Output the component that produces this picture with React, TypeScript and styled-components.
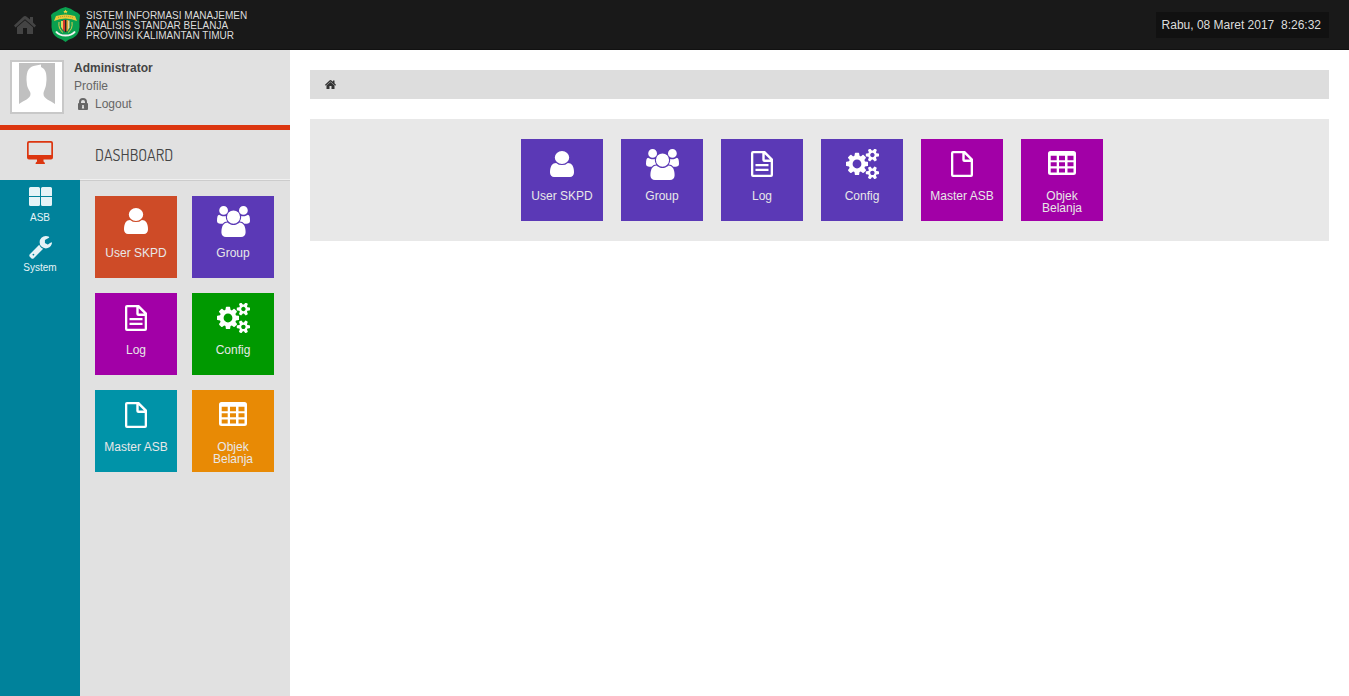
import React from "react";
import styled, { createGlobalStyle } from "styled-components";

const GlobalStyle = createGlobalStyle`
  * { box-sizing: border-box; }
  body {
    margin: 0;
    background: #fff;
    color: #666;
    font: 12px/18px "Liberation Sans", Arial, sans-serif;
  }
  a { color: inherit; text-decoration: none; }
  svg { display: block; flex: none; }
`;

const Page = styled.div`
  display: flex;
  flex-direction: column;
  min-height: 100vh;
`;

const Header = styled.header`
  display: flex;
  align-items: center;
  height: 50px;
  padding: 0 20px 0 14px;
  background: #191919;
  border-bottom: 1px solid #111;
`;

const HomeLink = styled.a`
  color: #444;
  margin-right: 15px;
`;

const Brand = styled.a`
  display: flex;
  align-items: center;
  gap: 6px;
  color: #ddd;
  font-size: 10px;
  line-height: 10px;
`;

const BrandName = styled.span`
  padding-top: 2px;
`;

const Clock = styled.time`
  margin-left: auto;
  padding: 4px 8px 4px 6px;
  background: #111;
  color: #ddd;
  white-space: pre;
`;

const Body = styled.div`
  display: flex;
  flex: 1;
`;

const Sidebar = styled.aside`
  display: flex;
  flex-direction: column;
  width: 290px;
  flex: none;
  background: #e1e1e1;
`;

const Account = styled.section`
  display: flex;
  gap: 10px;
  height: 80px;
  padding: 10px 10px 0;
  border-bottom: 5px solid #dc3610;
`;

const Avatar = styled.div`
  width: 54px;
  height: 54px;
  border: 2px solid #c8c8c8;
  background: #fff;
  display: flex;
  justify-content: center;
`;

const AccountLinks = styled.div`
  display: flex;
  flex-direction: column;
  margin-top: -1px;
`;

const UserName = styled.strong`
  color: #444;
`;

const Logout = styled.a`
  display: flex;
  align-items: center;
  gap: 7px;
  padding-left: 4px;
`;

const DashboardBar = styled.div`
  display: flex;
  align-items: center;
  height: 50px;
`;

const DashboardIcon = styled.a`
  display: flex;
  justify-content: center;
  width: 80px;
  padding-bottom: 5px;
  color: #dc3610;
`;

const DashboardTitle = styled.h1`
  flex: 1;
  height: 50px;
  margin: 0;
  padding-left: 15px;
  border-bottom: 1px solid #f0f0f0;
  color: #444;
  font: 400 16px/50px Dosis, "Roboto Condensed", "Open Sans Condensed", Lato, sans-serif;
`;

const SideContent = styled.div`
  display: flex;
  flex: 1;
`;

const Rail = styled.nav`
  width: 80px;
  padding-top: 4px;
  background: #00829b;
`;

const RailLink = styled.a`
  display: flex;
  flex-direction: column;
  align-items: center;
  height: 50px;
  color: #e6f3f7;
  font-size: 10px;
  line-height: 12px;
`;

const RailIcon = styled.span`
  display: flex;
  align-items: center;
  height: 26px;
  margin-bottom: 2px;
`;

const SideTiles = styled.nav`
  flex: 1;
  display: grid;
  grid-template-columns: 82px 82px;
  align-content: start;
  gap: 15px;
  padding: 15px;
  border-top: 1px solid #ccc;
`;

const Tile = styled.a<{ $color: string }>`
  display: block;
  width: 82px;
  height: 82px;
  padding: 9px 6px 0;
  background: ${(p) => p.$color};
  color: #e8e8e8;
  line-height: 12px;
  text-align: center;
`;

const TileIcon = styled.span`
  display: flex;
  align-items: center;
  justify-content: center;
  height: 32px;
  margin-bottom: 10px;
  color: #fff;
`;

const Main = styled.main`
  flex: 1;
  padding: 20px;
`;

const Breadcrumb = styled.nav`
  display: flex;
  align-items: center;
  height: 29px;
  margin-bottom: 20px;
  padding: 0 15px;
  background: #ddd;
  color: #333;
`;

const TilePanel = styled.section`
  display: flex;
  flex-wrap: wrap;
  justify-content: center;
  gap: 18px;
  padding: 20px 15px 20px 0;
  background: #e8e8e8;
`;

type IconName = "user" | "group" | "log" | "config" | "file" | "table" | "wrench" | "lock" | "home" | "desktop" | "grid";

const smallGear =
  "v140q0 16-149 31-12 27-30 52 51 113 51 138 0 4-4 7-122 71-124 71-8 0-46-47t-52-68q-20 2-30 2t-30-2q-14 21-52 68t-46 47q-2 0-124-71-4-3-4-7 0-25 51-138-18-25-30-52-149-15-149-31v-140q0-16 149-31 13-29 30-52-51-113-51-138 0-4 4-7 4-2 35-20t59-34 30-16q8 0 46 46.5t52 67.5q20-2 30-2t30 2q51-71 92-112l6-2q4 0 124 70 4 3 4 7 0 25-51 138 17 23 30 52 149 15 149 31z";

const sheet =
  "M2 0H14L22 8V24Q22 26 20 26H2Q0 26 0 24V2Q0 0 2 0ZM2.300 2.300V23.700H19.700V11H13.500Q11.300 11 11.300 9V2.300ZM13.700 3.200V8.500H19Z";

const icons: Record<IconName, { box: string; w: number; h: number; d: string }> = {
  user: {
    box: "256 128 1280 1536", w: 24, h: 26,
    d: "M1536 1399q0 109-62.5 187t-150.5 78h-854q-88 0-150.5-78t-62.5-187q0-85 8.5-160.5t31.5-152 58.5-131 94-89 134.5-34.5q131 128 313 128t313-128q76 0 134.5 34.5t94 89 58.5 131 31.5 152 8.5 160.5zm-256-887q0 159-112.5 271.5t-271.5 112.5-271.5-112.5-112.5-271.5 112.5-271.5 271.5-112.5 271.5 112.5 112.5 271.5z",
  },
  group: {
    box: "0 0 1920 1792", w: 33, h: 31,
    d: "M593 896q-162 5-265 128h-134q-82 0-138-40.5t-56-118.5q0-353 124-353 6 0 43.5 21t97.5 42.5 119 21.5q67 0 133-23-5 37-5 66 0 139 81 256zm1071 637q0 120-73 189.5t-194 69.5h-874q-121 0-194-69.5t-73-189.5q0-53 3.5-103.5t14-109 26.5-108.5 43-97.5 62-81 85.5-53.5 111.5-20q10 0 43 21.5t73 48 107 48 135 21.5 135-21.5 107-48 73-48 43-21.5q61 0 111.5 20t85.5 53.5 62 81 43 97.5 26.5 108.5 14 109 3.5 103.5zm-1024-1277q0 106-75 181t-181 75-181-75-75-181 75-181 181-75 181 75 75 181zm704 384q0 159-112.5 271.5t-271.5 112.5-271.5-112.5-112.5-271.5 112.5-271.5 271.5-112.5 271.5 112.5 112.5 271.5zm576 225q0 78-56 118.5t-138 40.5h-134q-103-123-265-128 81-117 81-256 0-29-5-66 66 23 133 23 59 0 119-21.5t97.5-42.5 43.5-21q124 0 124 353zm-128-609q0 106-75 181t-181 75-181-75-75-181 75-181 181-75 181 75 75 181z",
  },
  config: {
    box: "0 40 1920 1720", w: 33, h: 30,
    d: "M896 896q0-106-75-181t-181-75-181 75-75 181 75 181 181 75 181-75 75-181zm768 512q0-52-38-90t-90-38-90 38-38 90q0 53 37.5 90.5t90.5 37.5 90.5-37.5 37.5-90.5zm0-1024q0-52-38-90t-90-38-90 38-38 90q0 53 37.5 90.5t90.5 37.5 90.5-37.5 37.5-90.5zm-384 421v185q0 10-7 19.5t-16 10.5l-155 24q-11 35-32 76 34 48 90 115 7 11 7 20 0 12-7 19-23 30-82.5 89.5t-78.5 59.5q-11 0-21-7l-115-90q-37 19-77 31-11 108-23 155-7 24-30 24h-186q-11 0-20-7.5t-10-17.5l-23-153q-34-10-75-31l-118 89q-7 7-20 7-11 0-21-8-144-133-144-160 0-9 7-19 10-14 41-53t47-61q-23-44-35-82l-152-24q-10-1-17-9.5t-7-19.5v-185q0-10 7-19.5t16-10.5l155-24q11-35 32-76-34-48-90-115-7-11-7-20 0-12 7-20 22-30 82-89t79-59q11 0 21 7l115 90q34-18 77-32 11-108 23-154 7-24 30-24h186q11 0 20 7.5t10 17.5l23 153q34 10 75 31l118-89q8-7 20-7 11 0 21 8 144 133 144 160 0 8-7 19-12 16-42 54t-45 60q23 48 34 82l152 23q10 2 17 10.5t7 19.5zM1920 1338" + smallGear + "M1920 314" + smallGear,
  },
  log: {
    box: "0 0 22 26", w: 22, h: 26,
    d: sheet + "M4.500 13H17.500V15.300H4.500ZM4.500 17.700H17.500V20H4.500Z",
  },
  file: { box: "0 0 22 26", w: 22, h: 26, d: sheet },
  table: {
    box: "0 0 28 26", w: 28, h: 26,
    d: "M2.500 0H25.500Q28 0 28 2.500V21.500Q28 24 25.500 24H2.500Q0 24 0 21.500V2.500Q0 0 2.500 0ZM2.700 4.800V9.200H8.700V4.800ZM11 4.800V9.200H17V4.800ZM19.500 4.800V9.200H25.500V4.800ZM2.700 11.200V15.200H8.700V11.200ZM11 11.200V15.200H17V11.200ZM19.500 11.200V15.200H25.500V11.200ZM2.700 17.500V21.500H8.700V17.500ZM11 17.500V21.500H17V17.500ZM19.500 17.500V21.500H25.500V17.500Z",
  },
  wrench: {
    box: "64 128 1664 1664", w: 23, h: 23,
    d: "M448 1472q0-26-19-45t-45-19-45 19-19 45 19 45 45 19 45-19 19-45zm644-420l-682 682q-37 37-90 37-52 0-91-37l-106-108q-38-36-38-90 0-53 38-91l681-681q39 98 114.5 173.500t173.500 114.500zm634-435q0 39-23 106-47 134-164.500 217.500t-258.500 83.500q-185 0-316.500-131.500t-131.500-316.500 131.500-316.500 316.500-131.500q58 0 121.500 16.500t107.500 46.500q16 11 16 28t-16 28l-293 169v224l193 107q5-3 79-48.500t135.500-81 70.500-35.500q15 0 23.500 10t8.500 25z",
  },
  lock: {
    box: "0 0 10 12", w: 10, h: 12,
    d: "M1 5V4Q1 0 5 0T9 4V5Q10 5 10 6V11Q10 12 9 12H1Q0 12 0 11V6Q0 5 1 5ZM3 5H7V4Q7 2 5 2T3 4ZM4.200 7V8.500L3.800 10.500H6.200L5.800 8.500V7Z",
  },
  home: {
    box: "0 0 22 18", w: 22, h: 18,
    d: "M11 0Q12 0 13 1L16 3.500V1H19V6.500L22 9.500L20.500 11.500L11 3.200L1.500 11.500L0 9.500L9 1Q10 0 11 0ZM11 4.200L19 11.200V18H13V12H9V18H3V11.200Z",
  },
  desktop: {
    box: "0 0 26 23", w: 26, h: 23,
    d: "M2 0H24Q26 0 26 2V16.500Q26 18.500 24 18.500H16.500V20.500Q18 21 18 23H8.500Q8.500 21 10 20.500V18.500H2Q0 18.500 0 16.500V2Q0 0 2 0ZM2.500 1.700Q1.700 1.700 1.700 2.500V14H24.300V2.500Q24.300 1.700 23.500 1.700Z",
  },
  grid: {
    box: "0 0 23 21", w: 23, h: 21,
    d: "M1.500 0H9.500Q11 0 11 1.500V9H0V1.500Q0 0 1.500 0ZM13.500 0H21.500Q23 0 23 1.500V9H12V1.500Q12 0 13.500 0ZM0 10H11V17.500Q11 19 9.500 19H1.500Q0 19 0 17.500ZM12 10H23V17.500Q23 19 21.500 19H13.500Q12 19 12 17.500Z",
  },
};

function Icon({ name, w, h }: { name: IconName; w?: number; h?: number }) {
  const icon = icons[name];
  return (
    <svg width={w ?? icon.w} height={h ?? icon.h} viewBox={icon.box} preserveAspectRatio="none" fill="currentColor" fillRule="evenodd" aria-hidden="true">
      <path d={icon.d} />
    </svg>
  );
}

function Crest() {
  return (
    <svg width="29" height="35" viewBox="0 0 29 35" aria-hidden="true">
      <path d="M14.500 0Q20 1 24 4.500Q27 5 29 8Q28 14 28.500 20Q28 28 22 31Q17 32.500 14.500 35Q12 32.500 7 31Q1 28 .5 20Q1 14 0 8Q2 5 5 4.500Q9 1 14.500 0Z" fill="#0aa04f" />
      <path d="M14.500 2.500l.7 1.500h1.600l-1.200 1 .5 1.600-1.600-1-1.600 1 .5-1.600-1.200-1h1.600Z" fill="#f4d742" />
      <path d="M5 9Q14.500 6 24 9L26 14Q21 11.500 14.500 11.500T3 14Z" fill="#e8c93a" />
      <path d="M7 10.500Q14.500 8 22 10.500" fill="none" stroke="#a08c28" strokeWidth="1" strokeDasharray="1 1" />
      <path d="M8 15Q7 22 12 25.500M21 15Q22 22 17 25.500" fill="none" stroke="#d8c850" strokeWidth="1" />
      <path d="M10 14Q14.500 11.500 19 14V19Q19 23 14.500 25.500Q10 23 10 19Z" fill="#3b6b45" />
      <path d="M10 14h2v9l-2-3z" fill="#e8d060" />
      <path d="M12 13h2v11.500l-2-1.500z" fill="#d3382b" />
      <path d="M14 13h1.500v12H14z" fill="#222" />
      <path d="M15.500 13h1.500v10.500l-1.500 1z" fill="#e0a030" />
      <path d="M17 13.500h1.500v7L17 23z" fill="#dcd9a0" />
      <path d="M5 24.500Q8 28.500 14.500 28.500T24 24.500" fill="none" stroke="#f2f2f2" strokeWidth="2" />
    </svg>
  );
}

interface TileData { label: string; icon: IconName; side: string; main: string }

const tiles: TileData[] = [
  { label: "User SKPD", icon: "user", side: "#ce4b27", main: "#5b39b6" },
  { label: "Group", icon: "group", side: "#5b39b6", main: "#5b39b6" },
  { label: "Log", icon: "log", side: "#a200a7", main: "#5b39b6" },
  { label: "Config", icon: "config", side: "#009900", main: "#5b39b6" },
  { label: "Master ASB", icon: "file", side: "#0093a8", main: "#a200a7" },
  { label: "Objek Belanja", icon: "table", side: "#e88a05", main: "#a200a7" },
];

function TileLink({ tile, color }: { tile: TileData; color: string }) {
  return (
    <Tile href="#" $color={color}>
      <TileIcon><Icon name={tile.icon} /></TileIcon>
      {tile.label}
    </Tile>
  );
}

export default function App() {
  return (
    <Page>
      <GlobalStyle />
      <Header>
        <HomeLink href="#" aria-label="Home"><Icon name="home" /></HomeLink>
        <Brand href="#">
          <Crest />
          <BrandName>
            SISTEM INFORMASI MANAJEMEN<br />
            ANALISIS STANDAR BELANJA<br />
            PROVINSI KALIMANTAN TIMUR
          </BrandName>
        </Brand>
        <Clock>{"Rabu, 08 Maret 2017  8:26:32"}</Clock>
      </Header>
      <Body>
        <Sidebar>
          <Account>
            <Avatar>
              <svg width="36" height="50" viewBox="0 0 36 50" aria-hidden="true">
                <path d="M0 1H36V42H0Z" fill="#c0c0c0" />
                <path d="M7.500 18C7.500 8 10 4.500 17 3.500L22 2.500L22 5C27 7 27.500 12 27.500 18L27 23C26 28 24.500 29 24.500 32C24.500 37 31 38 36 42V50H0V42C5 38 11.500 37 11.500 32C11.500 29 9 28 8 23Z" fill="#fff" />
              </svg>
            </Avatar>
            <AccountLinks>
              <UserName>Administrator</UserName>
              <a href="#">Profile</a>
              <Logout href="#"><Icon name="lock" />Logout</Logout>
            </AccountLinks>
          </Account>
          <DashboardBar>
            <DashboardIcon href="#" aria-label="Dashboard"><Icon name="desktop" /></DashboardIcon>
            <DashboardTitle>DASHBOARD</DashboardTitle>
          </DashboardBar>
          <SideContent>
            <Rail>
              <RailLink href="#"><RailIcon><Icon name="grid" /></RailIcon>ASB</RailLink>
              <RailLink href="#"><RailIcon><Icon name="wrench" /></RailIcon>System</RailLink>
            </Rail>
            <SideTiles>
              {tiles.map((t) => <TileLink key={t.label} tile={t} color={t.side} />)}
            </SideTiles>
          </SideContent>
        </Sidebar>
        <Main>
          <Breadcrumb aria-label="Breadcrumb">
            <a href="#" aria-label="Home"><Icon name="home" w={11} h={9} /></a>
          </Breadcrumb>
          <TilePanel>
            {tiles.map((t) => <TileLink key={t.label} tile={t} color={t.main} />)}
          </TilePanel>
        </Main>
      </Body>
    </Page>
  );
}
